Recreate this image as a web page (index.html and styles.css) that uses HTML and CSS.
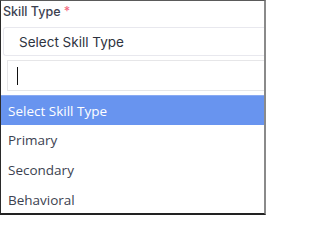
FILE: index.html
```html
<!DOCTYPE html>
<html>
<head>
<meta charset="utf-8">
<link rel="stylesheet" href="styles.css">
</head>
<body>
<div class="frame">
  <div class="label">Skill Type <span class="req">*</span></div>
  <div class="select">Select Skill Type</div>
  <div class="dropdown">
    <div class="search"><span class="caret"></span></div>
    <ul class="options">
      <li class="opt active">Select Skill Type</li>
      <li class="opt">Primary</li>
      <li class="opt">Secondary</li>
      <li class="opt">Behavioral</li>
    </ul>
  </div>
</div>
</body>
</html>
```
FILE: styles.css
```css
html, body { margin: 0; padding: 0; background: #fff; }
.frame {
  width: 266px; height: 215px; box-sizing: border-box;
  border-top: 1px solid #5a5a5a;
  border-left: 1px solid #2a2a2a;
  border-right: 2px solid #8a8a8a;
  border-bottom: 2px solid #222;
  overflow: hidden;
  background: #fff;
}
.label {
  font-family: Inter, "Open Sans", sans-serif;
  font-size: 12.5px; font-weight: 500; color: #3b4150;
  height: 26px; line-height: 15px; padding: 3px 0 0 2px; box-sizing: border-box;
}
.req { color: #f46a80; }
.select {
  margin-left: 2px; height: 29px; box-sizing: border-box;
  border: 1px solid #e8e8ee; border-right: none; border-radius: 3px 0 0 3px;
  font-family: Inter, "Open Sans", sans-serif; font-size: 13.5px; color: #2e3340;
  display: flex; align-items: center; padding-left: 15px;
}
.dropdown { padding-top: 4px; }
.search {
  margin: 0 0 4px 6px; height: 31px; box-sizing: border-box;
  border: 1px solid #e6e6e8; border-right: none;
  display: flex; align-items: center; padding-left: 9px;
}
.caret { width: 1px; height: 18px; background: #111; }
.options { list-style: none; margin: 0; padding: 0; }
.opt {
  height: 30px; display: flex; align-items: center; padding-left: 7px;
  font-family: "Open Sans", sans-serif; font-size: 13.5px; color: #3c4250;
}
.opt.active { background: #6894ef; color: #fff; border-top: 1px solid #8aaaf2; box-sizing: border-box; }
```
